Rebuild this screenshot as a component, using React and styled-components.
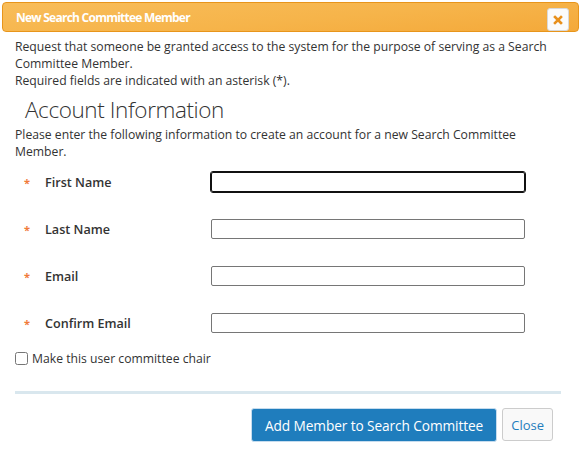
import React from "react";
import styled, { createGlobalStyle } from "styled-components";

const Global = createGlobalStyle`
  html, body { margin: 0; padding: 0; background: #fff; }
  body { font-family: "Open Sans", "Noto Sans", sans-serif; color: #333; }
`;

const Dialog = styled.div`
  width: 581px;
  height: 453px;
  box-sizing: border-box;
  padding: 2px 2px 0 2px;
  display: flex;
  flex-direction: column;
`;

const TitleBar = styled.div`
  height: 30px;
  box-sizing: border-box;
  border: 1px solid #e8951b;
  border-radius: 4px;
  background: linear-gradient(175deg, #f8bd5a 0%, #f6b44a 55%, #f4a93a 100%);
  display: flex;
  align-items: center;
  justify-content: space-between;
  padding: 0 9px 0 13px;
`;

const Title = styled.span`
  color: #fff;
  font-weight: 700;
  font-size: 12px;
  letter-spacing: -0.75px;
`;

const CloseX = styled.button`
  width: 22px;
  height: 23px;
  margin-top: 5px;
  box-sizing: border-box;
  border: 1px solid #d8d8d8;
  border-radius: 3px;
  background: #fbfbfb;
  display: flex;
  align-items: center;
  justify-content: center;
  padding: 0;
`;

const Body = styled.div`
  padding: 6px 4px 0 13px;
  font-size: 12.2px;
  line-height: 17px;
`;

const Para = styled.p`
  margin: 0;
  max-width: 551px;
`;

const Heading = styled.h2`
  margin: 0;
  padding: 5px 0 0 10px;
  font-size: 22.5px;
  font-weight: 300;
  line-height: 32px;
  letter-spacing: -0.4px;
  color: #333;
`;

const Form = styled.div`
  display: flex;
  flex-direction: column;
  gap: 27px;
  padding: 12px 0 0 9px;
`;

const Row = styled.div`
  display: flex;
  align-items: center;
  height: 20px;
`;

const Star = styled.span`
  width: 21px;
  color: #f07a3a;
  font-size: 11px;
  font-weight: 700;
`;

const Label = styled.label`
  width: 166px;
  font-weight: 600;
  font-size: 12.6px;
  color: #333;
`;

const Input = styled.input`
  width: 314px;
  height: 20px;
  box-sizing: border-box;
  border: 1px solid ${(p) => (p.$focused ? "#111" : "#767676")};
  outline: ${(p) => (p.$focused ? "1px solid #111" : "none")};
  border-radius: 2px;
  background: #fff;
`;

const CheckRow = styled.div`
  display: flex;
  align-items: center;
  gap: 4px;
  margin-top: 17px;
`;

const Check = styled.input`
  margin: 0;
  width: 13px;
  height: 13px;
`;

const Divider = styled.div`
  height: 3px;
  background: #d9e7ee;
  margin: 24px 14px 0 0;
`;

const Buttons = styled.div`
  display: flex;
  justify-content: flex-end;
  align-items: flex-start;
  gap: 5px;
  padding: 14px 22px 0 0;
`;

const Primary = styled.button`
  height: 34px;
  padding: 0 13px;
  border: 1px solid #c6dcee;
  outline: none;
  border-radius: 3px;
  background: #1f7dbd;
  box-shadow: inset 0 0 0 1px #1f7dbd;
  color: #fff;
  font-family: inherit;
  font-size: 13.7px;
  letter-spacing: -0.1px;
`;

const Secondary = styled.button`
  height: 33px;
  padding: 0 8px;
  border: 1px solid #ccc;
  border-radius: 3px;
  background: #f9f9f9;
  color: #1f7dbd;
  font-family: inherit;
  font-size: 13px;
`;

const fields = ["First Name", "Last Name", "Email", "Confirm Email"];

export default function App() {
  return (
    <>
      <Global />
      <Dialog>
        <TitleBar>
          <Title>New Search Committee Member</Title>
          <CloseX aria-label="close">
            <svg width="10" height="10" viewBox="0 0 10 10">
              <path d="M2 2 L8 8 M8 2 L2 8" stroke="#e8901c" strokeWidth="2.6" strokeLinecap="square" />
            </svg>
          </CloseX>
        </TitleBar>
        <Body>
          <Para>
            Request that someone be granted access to the system for the purpose of serving as a Search
            Committee Member.
          </Para>
          <Para>Required fields are indicated with an asterisk (*).</Para>
          <Heading>Account Information</Heading>
          <Para>
            Please enter the following information to create an account for a new Search Committee
            Member.
          </Para>
          <Form>
            {fields.map((f, i) => (
              <Row key={f}>
                <Star>*</Star>
                <Label>{f}</Label>
                <Input $focused={i === 0} />
              </Row>
            ))}
          </Form>
          <CheckRow>
            <Check type="checkbox" />
            <span>Make this user committee chair</span>
          </CheckRow>
          <Divider />
          <Buttons>
            <Primary>Add Member to Search Committee</Primary>
            <Secondary>Close</Secondary>
          </Buttons>
        </Body>
      </Dialog>
    </>
  );
}
